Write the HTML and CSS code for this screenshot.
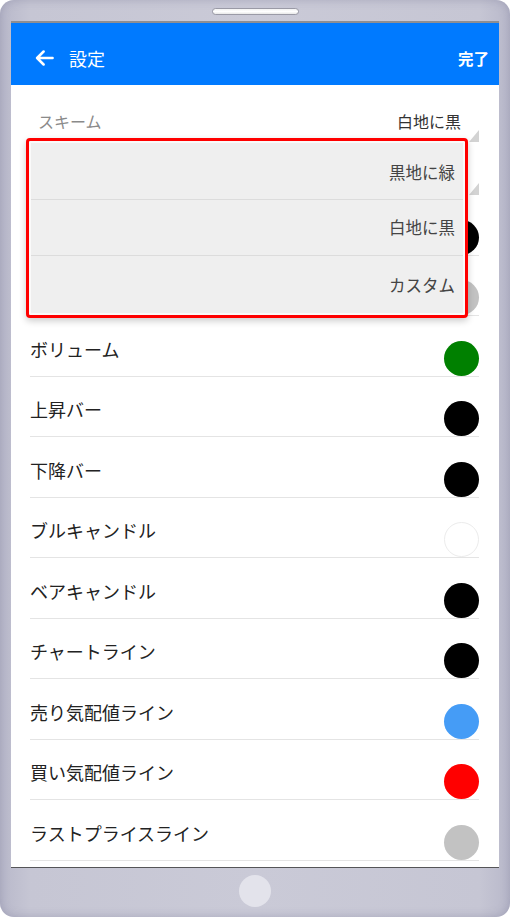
FILE: index.html
```html
<!DOCTYPE html>
<html lang="ja">
<head>
<meta charset="utf-8">
<title>設定</title>
<link rel="stylesheet" href="styles.css">
</head>
<body>
<div class="phone">
  <div class="speaker"></div>
  <div class="screen">
    <header class="appbar">
      <div class="appbar-left">
        <svg class="back" width="19" height="16" viewBox="0 0 19 16" aria-hidden="true">
          <path d="M17.6 8H2.2M8.6 1.5L2.1 8L8.6 14.5" fill="none" stroke="#fff" stroke-width="2.5" stroke-linecap="round" stroke-linejoin="round"/>
        </svg>
        <span class="title">設定</span>
      </div>
      <span class="done">完了</span>
    </header>
    <div class="content">
      <div class="select-row scheme">
        <span class="scheme-label">スキーム</span>
        <span class="select-box"><span class="select-value">白地に黒</span><span class="tri"></span></span>
      </div>
      <div class="select-row second">
        <span class="select-box"><span class="tri"></span></span>
      </div>
      <div class="row"><span class="label">背景</span><span class="dot black"></span></div>
      <div class="row"><span class="label">グリッド</span><span class="dot gray"></span></div>
      <div class="row"><span class="label">ボリューム</span><span class="dot green"></span></div>
      <div class="row"><span class="label">上昇バー</span><span class="dot black"></span></div>
      <div class="row"><span class="label">下降バー</span><span class="dot black"></span></div>
      <div class="row"><span class="label">ブルキャンドル</span><span class="dot white"></span></div>
      <div class="row"><span class="label">ベアキャンドル</span><span class="dot black"></span></div>
      <div class="row"><span class="label">チャートライン</span><span class="dot black"></span></div>
      <div class="row"><span class="label">売り気配値ライン</span><span class="dot blue"></span></div>
      <div class="row"><span class="label">買い気配値ライン</span><span class="dot red"></span></div>
      <div class="row"><span class="label">ラストプライスライン</span><span class="dot gray"></span></div>

      <div class="dropdown">
        <div class="dropdown-inner">
          <div class="option">黒地に緑</div>
          <div class="option">白地に黒</div>
          <div class="option">カスタム</div>
        </div>
      </div>
    </div>
  </div>
  <div class="home-area"><div class="home"></div></div>
</div>
</body>
</html>
```
FILE: styles.css
```css
html, body {
  margin: 0;
  padding: 0;
  background: #ffffff;
}

body {
  font-family: "Noto Sans CJK JP", "Noto Sans", sans-serif;
}

.phone {
  width: 510px;
  height: 917px;
  box-sizing: border-box;
  border-radius: 14px;
  background: linear-gradient(to right, #b8b8ca 0%, #c6c6d4 6%, #cacad7 50%, #c6c6d4 94%, #b8b8ca 100%);
  box-shadow: inset 0 0 10px rgba(110, 110, 140, 0.35);
  padding-top: 8px;
  display: flex;
  flex-direction: column;
}

.speaker {
  width: 87px;
  height: 7px;
  box-sizing: border-box;
  margin: 0 auto 6px;
  border: 1px solid #9a9aa6;
  border-radius: 4px;
  background: linear-gradient(#f2f2f2, #ffffff 50%, #e8e8e8);
}

.screen {
  margin: 0 11px;
  border-top: 2px solid #8e8e92;
  border-bottom: 1px solid #555558;
  background: #ffffff;
  display: flex;
  flex-direction: column;
}

.appbar {
  height: 62px;
  box-sizing: border-box;
  padding: 7px 10px 0 24px;
  background: #007aff;
  display: flex;
  align-items: center;
  justify-content: space-between;
  color: #ffffff;
}

.appbar-left {
  display: flex;
  align-items: center;
  gap: 15px;
}

.back {
  display: block;
}

.title {
  font-size: 18px;
  line-height: 24px;
}

.done {
  font-size: 15.5px;
  font-weight: bold;
  line-height: 24px;
}

.content {
  position: relative;
  height: 782px;
  overflow: hidden;
  background: #ffffff;
}

.select-row {
  display: flex;
  align-items: flex-end;
  justify-content: space-between;
  box-sizing: border-box;
  padding: 0 20px 0 27px;
}

.scheme {
  height: 57px;
}

.second {
  height: 53px;
  justify-content: flex-end;
}

.scheme-label {
  font-size: 16px;
  line-height: 24px;
  color: #8a8a8a;
  padding-bottom: 9px;
}

.select-box {
  position: relative;
  display: flex;
  align-items: flex-end;
  height: 100%;
  padding-right: 18px;
}

.select-value {
  font-size: 16px;
  line-height: 24px;
  color: #333333;
  padding-bottom: 9px;
}

.tri {
  position: absolute;
  right: 0;
  bottom: 0;
  width: 0;
  height: 0;
  border-left: 10px solid transparent;
  border-bottom: 12px solid #d3d3d3;
}

.row {
  height: 60.5px;
  box-sizing: border-box;
  margin: 0 20px 0 19px;
  border-bottom: 1px solid #e4e4e4;
  display: flex;
  align-items: flex-end;
  justify-content: space-between;
}

.label {
  font-size: 18px;
  line-height: 24px;
  color: #222222;
  padding-bottom: 15px;
}

.dot {
  width: 35px;
  height: 35px;
  box-sizing: border-box;
  border-radius: 50%;
  flex: none;
}

.black { background: #000000; }
.gray { background: #c2c2c2; }
.green { background: #008000; }
.white { background: #ffffff; border: 1px solid #ececec; }
.blue { background: #459cf6; }
.red { background: #ff0000; }

.dropdown {
  position: absolute;
  top: 53px;
  left: 15px;
  width: 442px;
  height: 180px;
  box-sizing: border-box;
  border: 3px solid #ff0000;
  border-radius: 4px;
  padding: 2px;
  background: #fafafa;
  box-shadow: 0 3px 7px rgba(0, 0, 0, 0.2);
}

.dropdown-inner {
  height: 100%;
  background: #efefef;
  display: flex;
  flex-direction: column;
}

.option {
  flex: 1;
  display: flex;
  align-items: center;
  justify-content: flex-end;
  padding-right: 8px;
  padding-bottom: 1px;
  font-size: 16.5px;
  color: #444444;
  border-bottom: 1px solid #dcdcdc;
}

.option:first-child {
  padding-top: 2px;
}

.option:last-child {
  border-bottom: none;
  padding-top: 3px;
}

.home-area {
  flex: 1;
  display: flex;
  justify-content: center;
  padding-top: 7px;
}

.home {
  width: 32px;
  height: 32px;
  border-radius: 50%;
  background: #e3e3eb;
}
```
